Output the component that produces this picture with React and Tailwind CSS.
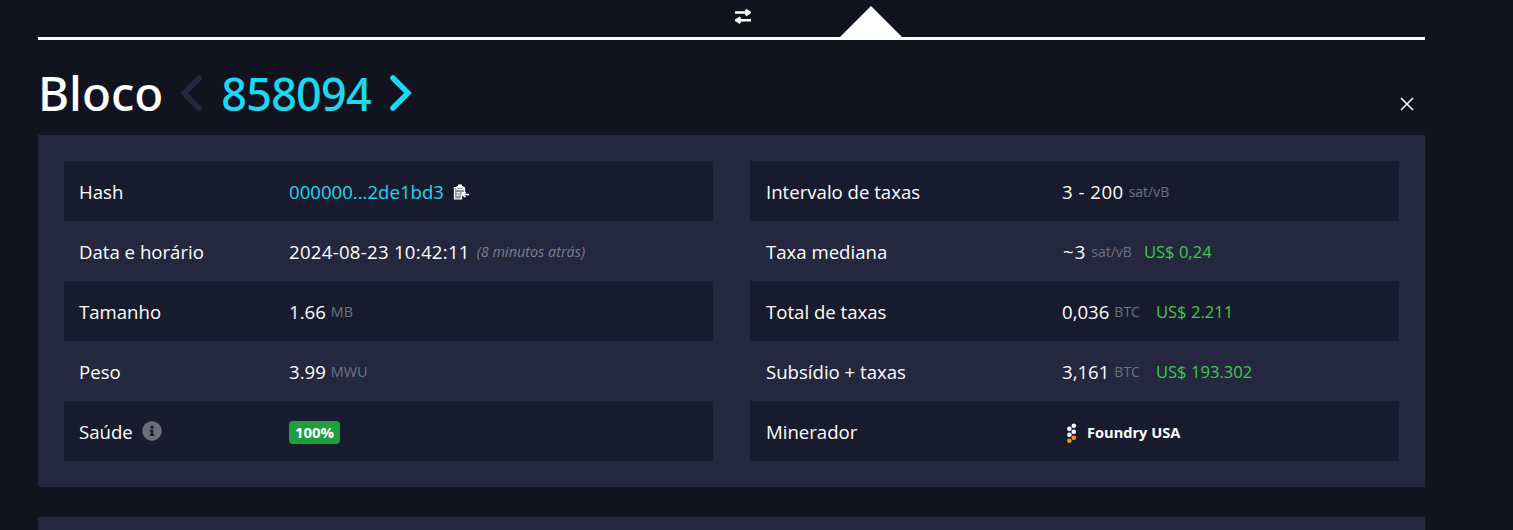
import React from "react";
import { FaInfoCircle } from "react-icons/fa";

function Chevron({ dir, color }) {
  return (
    <svg width="24" height="36" viewBox="0 0 24 36" className="shrink-0">
      <path
        d={dir === "left" ? "M20 3 L5 18 L20 33" : "M4 3 L19 18 L4 33"}
        fill="none"
        stroke={color}
        strokeWidth="5.5"
        strokeLinecap="round"
        strokeLinejoin="miter"
      />
    </svg>
  );
}

function ExchangeIcon() {
  return (
    <svg width="16" height="15" viewBox="0 0 16 15" className="shrink-0">
      <path d="M0 3.5H13M10.5 0.8L15 3.5 10.5 6.2" fill="none" stroke="#fff" strokeWidth="2.4" />
      <path d="M16 11.2H3M5.5 8.5L1 11.2 5.5 13.9" fill="none" stroke="#fff" strokeWidth="2.4" />
    </svg>
  );
}

function CopyIcon() {
  return (
    <svg width="16" height="16" viewBox="0 0 16 16" className="shrink-0">
      <path d="M1.5 3.5h2.5v2h6v-2h1.5v5H9v3H8.5v3.5h-7z" fill="#8f909c" stroke="#fff" strokeWidth="1.2" />
      <path d="M5 0.5h4v1.5h1.5v2.5h-7V2H5z" fill="#fff" />
      <path d="M3.5 8h3.5v1.2H3.5zM3.5 10.5h3.5v1.2H3.5z" fill="#fff" />
      <path d="M16 10.5H9.5M12.5 8l-3 2.5 3 2.5" fill="none" stroke="#fff" strokeWidth="1.7" />
    </svg>
  );
}

function FoundryLogo() {
  const dots = [
    [6.8, 2.7, "#fff"],
    [2.4, 5.7, "#fff"],
    [6.8, 8.7, "#fff"],
    [2.4, 11.7, "#fff"],
    [6.8, 14.7, "#f7931a"],
    [2.4, 17.7, "#f7931a"],
  ];
  return (
    <svg width="10" height="20" viewBox="0 0 10 20" className="shrink-0 mt-[2px]">
      {dots.map(([x, y, c]) => (
        <circle key={`${x}-${y}`} cx={x} cy={y} r="2.3" fill={c} />
      ))}
    </svg>
  );
}

function Unit({ children, size = "text-[14px]" }) {
  return <span className={`${size} text-[#6f7180] ml-[5px]`}>{children}</span>;
}

function Fiat({ children, ml }) {
  return <span className={`text-[#3bcc49] text-[16.6px] ${ml}`}>{children}</span>;
}

function Row({ label, odd, labelW, right, children }) {
  return (
    <div className={`h-[60px] flex items-center pt-[2px] ${right ? "pl-[16px]" : "pl-[15px]"} ${odd ? "bg-[#181b2d]" : ""}`}>
      <div className={`${labelW} shrink-0 flex items-center`}>{label}</div>
      <div className="flex items-center whitespace-nowrap">{children}</div>
    </div>
  );
}

export default function App() {
  return (
    <div
      className="w-[1513px] h-[530px] overflow-hidden bg-[#11131f] text-white text-[18.6px] pl-[38px]"
      style={{ fontFamily: '"Open Sans", "Noto Sans", sans-serif' }}
    >
      <div className="w-[1387px]">
        <div className="h-[37px] flex items-start">
          <div className="mt-[9px] ml-[697px]"><ExchangeIcon /></div>
          <div className="ml-[89px] mt-[6px] w-0 h-0 border-l-[31px] border-r-[31px] border-b-[31px] border-l-transparent border-r-transparent border-b-white" />
        </div>
        <div className="h-[3px] bg-white" />
        <div className="h-[95px] flex items-start relative">
          <div className="flex items-center mt-[25px] h-[56px] leading-none font-medium font-['Noto_Sans']">
            <span className="text-[47.5px]">Bloco</span>
            <span className="ml-[16px]"><Chevron dir="left" color="#24273e" /></span>
            <span className="ml-[18px] text-[#1bd8f4] text-[45px] tracking-[-0.8px]">858094</span>
            <span className="ml-[18px]"><Chevron dir="right" color="#1bd8f4" /></span>
          </div>
          <button className="ml-auto mr-[11px] mt-[57px]">
            <svg width="14" height="14" viewBox="0 0 14 14" className="block">
              <path d="M1 1 L13 13 M13 1 L1 13" stroke="#fff" strokeWidth="1.5" />
            </svg>
          </button>
        </div>
        <div className="h-[352px] bg-[#24273e] p-[26px] grid grid-cols-2 gap-x-[37px]">
          <div>
            <Row odd label="Hash" labelW="w-[210px]">
              <span className="text-[#1bd8f4]">000000...2de1bd3</span>
              <span className="ml-[9px] mt-[1px]"><CopyIcon /></span>
            </Row>
            <Row label="Data e horário" labelW="w-[210px]">
              <span className="tracking-[0.28px]">2024-08-23 10:42:11</span>
              <i className="text-[14.4px] text-[#7d7f8c] ml-[7px]">(8 minutos atrás)</i>
            </Row>
            <Row odd label="Tamanho" labelW="w-[210px]">
              <span>1.66</span><Unit size="text-[14.4px]">MB</Unit>
            </Row>
            <Row label="Peso" labelW="w-[210px]">
              <span>3.99</span><Unit size="text-[14.4px]">MWU</Unit>
            </Row>
            <Row
              odd
              labelW="w-[210px]"
              label={<><span>Saúde</span><FaInfoCircle className="ml-[9px] text-[#6c6e7c] text-[20px] -mt-[2px]" /></>}
            >
              <span className="bg-[#1f9d3f] rounded-[4px] h-[23px] w-[51px] mt-[1px] flex items-center justify-center text-[15px] font-bold">100%</span>
            </Row>
          </div>
          <div>
            <Row right odd label="Intervalo de taxas" labelW="w-[296px]">
              <span className="tracking-[0.5px]">3 - 200</span><Unit>sat/vB</Unit>
            </Row>
            <Row right label="Taxa mediana" labelW="w-[296px]">
              <span className="ml-[1px] tracking-[1px]">~3</span><Unit>sat/vB</Unit><Fiat ml="ml-[12px]">US$ 0,24</Fiat>
            </Row>
            <Row right odd label="Total de taxas" labelW="w-[296px]">
              <span>0,036</span><Unit>BTC</Unit><Fiat ml="ml-[16px]">US$ 2.211</Fiat>
            </Row>
            <Row right label="Subsídio + taxas" labelW="w-[296px]">
              <span>3,161</span><Unit>BTC</Unit><Fiat ml="ml-[16px]">US$ 193.302</Fiat>
            </Row>
            <Row right odd label="Minerador" labelW="w-[296px]">
              <span className="ml-[5px]"><FoundryLogo /></span>
              <span className="ml-[10px] mt-[2px] text-[14.6px] font-bold">Foundry USA</span>
            </Row>
          </div>
        </div>
        <div className="mt-[30px] h-[40px] bg-[#24273e]" />
      </div>
    </div>
  );
}
